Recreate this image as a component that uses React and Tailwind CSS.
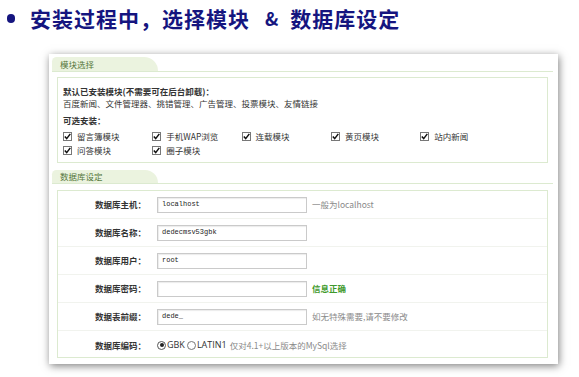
import React from 'react';

const cjk = { fontFamily: '"Noto Sans CJK SC", "Noto Sans", sans-serif' };

function Check({ label }) {
    return (
        <div className="flex items-center w-[89.3px]">
            <span className="w-[9px] h-[9px] border border-[#777] bg-white flex items-center justify-center mr-[5px] shrink-0">
                <svg width="7" height="7" viewBox="0 0 7 7">
                    <path d="M0.8 3.4 L2.7 5.6 L6.3 0.9" stroke="#111" strokeWidth="1.5" fill="none" />
                </svg>
            </span>
            <span className="text-[8.5px] leading-[12px] text-[#333]">{label}</span>
        </div>
    );
}

function Tab({ title, h }) {
    return (
        <div className="flex flex-col">
            <div className="flex">
                <div className={`${h} w-[106px] bg-[#ebf3df] rounded-tl-[5px] rounded-tr-[15px] flex items-center pl-[8px] text-[8.5px] text-[#55763a]`}>
                    {title}
                </div>
            </div>
            <div className="h-px w-[501px] bg-[#dcead0]" />
        </div>
    );
}

function Row({ label, value, hint, last, children }) {
    return (
        <div className={`h-[28px] flex items-center ${last ? '' : 'border-b border-[#f1f3ee]'}`}>
            <div className="w-[88px] text-right text-[8.5px] font-bold text-[#333]">{label}</div>
            <div className="ml-[11px] flex items-center">
                {children || (
                    <div className="w-[150px] h-[16px] border border-[#cacaca] bg-white flex items-center pl-[4px] text-[7px] text-[#222] shadow-[inset_1px_1px_1px_rgba(0,0,0,0.08)]" style={{ fontFamily: '"Liberation Mono", monospace' }}>
                        {value}
                    </div>
                )}
                {hint}
            </div>
        </div>
    );
}

export default function App() {
    return (
        <div className="w-[579px] h-[377px] bg-white overflow-hidden" style={cjk}>
            {/* 标题 */}
            <div className="flex items-center pt-[6px] pl-[7px] h-[30px]">
                <span className="w-[8px] h-[9px] rounded-full bg-[#15157f] mr-[15px]" />
                <span className="text-[21px] leading-[24px] font-bold text-[#15157f] tracking-[1px] flex items-center">
                    <span>安装过程中，选择模块</span>
                    <span className="ml-[15px] mr-[11px] text-[18px]">&amp;</span>
                    <span>数据库设定</span>
                </span>
            </div>

            <div className="ml-[49px] mt-[24px] w-[509px] h-[310px] bg-white shadow-[1px_2px_8px_rgba(0,0,0,0.5)] pt-[3px] pl-[3px]">
                <Tab title="模块选择" h="h-[14px]" />
                <div className="ml-[5px] mt-[5px] w-[491px] h-[86px] border border-[#dcead0] pl-[5px] pt-[7px] text-[#333]">
                    <div className="text-[8.5px] font-bold leading-[12px]">默认已安装模块(不需要可在后台卸载)：</div>
                    <div className="text-[8.5px] leading-[12px]">百度新闻、文件管理器、挑错管理、广告管理、投票模块、友情链接</div>
                    <div className="text-[8.5px] font-bold leading-[12px] mt-[5px]">可选安装：</div>
                    <div className="flex mt-[3px] h-[14px] items-center">
                        <Check label="留言簿模块" />
                        <Check label="手机WAP浏览" />
                        <Check label="连载模块" />
                        <Check label="黄页模块" />
                        <Check label="站内新闻" />
                    </div>
                    <div className="flex h-[14px] items-center">
                        <Check label="问答模块" />
                        <Check label="圈子模块" />
                    </div>
                </div>

                <div className="mt-[7px]">
                    <Tab title="数据库设定" h="h-[13px]" />
                </div>
                <div className="ml-[5px] mt-[6px] w-[491px] h-[168px] border border-[#dcead0]">
                    <Row label="数据库主机：" value="localhost" hint={<span className="ml-[5px] text-[8.5px] text-[#8a8a8a]">一般为localhost</span>} />
                    <Row label="数据库名称：" value="dedecmsv53gbk" />
                    <Row label="数据库用户：" value="root" />
                    <Row label="数据库密码：" value="" hint={<span className="ml-[5px] text-[8.5px] font-bold text-[#3f9a2c]">信息正确</span>} />
                    <Row label="数据表前缀：" value="dede_" hint={<span className="ml-[5px] text-[8.5px] text-[#8a8a8a]">如无特殊需要,请不要修改</span>} />
                    <Row label="数据库编码：" last>
                        <div className="flex items-center text-[8.5px]">
                            <span className="w-[9px] h-[9px] rounded-full border border-[#555] flex items-center justify-center">
                                <span className="w-[4px] h-[4px] rounded-full bg-[#222]" />
                            </span>
                            <span className="ml-[1px] text-[9px] text-[#333]" style={{ fontFamily: '"Open Sans", sans-serif' }}>GBK</span>
                            <span className="ml-[2px] w-[9px] h-[9px] rounded-full border border-[#777]" />
                            <span className="ml-[1px] text-[9px] text-[#333]" style={{ fontFamily: '"Open Sans", sans-serif' }}>LATIN1</span>
                            <span className="ml-[3px] text-[#8a8a8a]">仅对4.1+以上版本的MySql选择</span>
                        </div>
                    </Row>
                </div>
            </div>
        </div>
    );
}
